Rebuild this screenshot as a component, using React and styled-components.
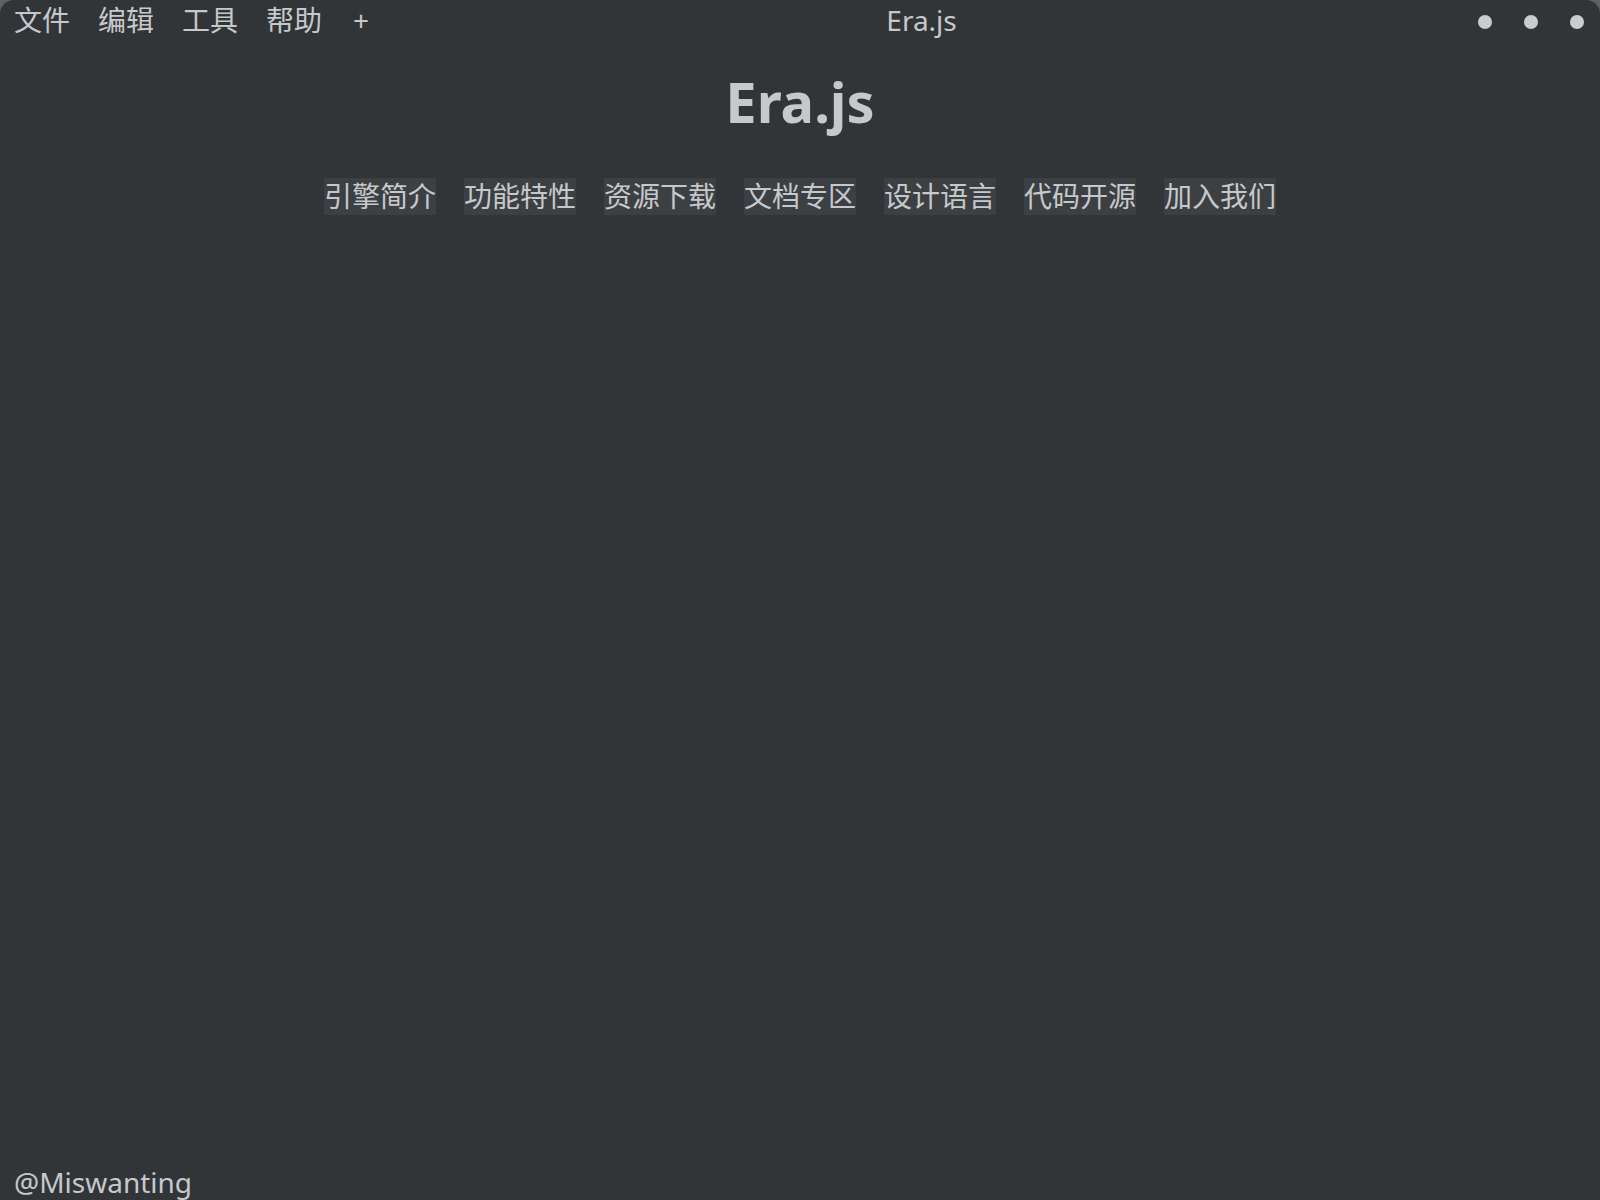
import React from "react";
import styled, { createGlobalStyle } from "styled-components";

const Global = createGlobalStyle`
  html, body {
    margin: 0;
    padding: 0;
    background: #5e6164;
    overflow: hidden;
  }
  body {
    font-family: "Noto Sans", "Noto Sans CJK SC", sans-serif;
    font-size: 28px;
    color: #c6c9cc;
  }
`;

const Window = styled.div`
  height: 100vh;
  display: flex;
  flex-direction: column;
  background: #323538;
  border-radius: 14px 14px 0 0;
  overflow: hidden;
`;

const TitleBar = styled.header`
  height: 42px;
  flex-shrink: 0;
  display: flex;
  align-items: flex-start;
  justify-content: space-between;
`;

const Menu = styled.nav`
  display: flex;
  align-items: center;
`;

const MenuItem = styled.span`
  padding: 0 14px;
  line-height: 40px;
  white-space: nowrap;
  cursor: default;
  ${(p) => p.$add && `width: 17px; padding: 0 11px 0 17px; text-align: left;`}
`;

const WindowTitle = styled.div`
  line-height: 40px;
  white-space: nowrap;
`;

const Controls = styled.div`
  display: flex;
  align-items: center;
`;

const ControlSlot = styled.div`
  padding: 0 16px;
  height: 42px;
  display: flex;
  align-items: center;
`;

const Dot = styled.span`
  width: 14px;
  height: 14px;
  border-radius: 50%;
  background: #c9cdd1;
  margin-top: 2px;
`;

const Main = styled.main`
  flex: 1;
  display: flex;
  flex-direction: column;
  align-items: center;
  padding-top: 21px;
`;

const Heading = styled.h1`
  margin: 0;
  font-size: 56px;
  font-weight: 700;
  line-height: 76px;
  color: #c6c9cc;
`;

const Nav = styled.nav`
  margin-top: 39px;
  display: flex;
  gap: 28px;
  justify-content: center;
`;

const NavItem = styled.span`
  display: inline-block;
  height: 37px;
  line-height: 37px;
  background: #3d4043;
  white-space: nowrap;
  cursor: pointer;
`;

const Footer = styled.footer`
  flex-shrink: 0;
  height: 39px;
  line-height: 39px;
  padding: 0 14px;
  margin-bottom: -2px;
  white-space: nowrap;
`;

const menu = ["文件", "编辑", "工具", "帮助"];
const links = ["引擎简介", "功能特性", "资源下载", "文档专区", "设计语言", "代码开源", "加入我们"];

export default function App() {
  return (
    <>
      <Global />
      <Window>
        <TitleBar>
          <Menu>
            {menu.map((m) => (
              <MenuItem key={m}>{m}</MenuItem>
            ))}
            <MenuItem $add>+</MenuItem>
          </Menu>
          <WindowTitle>Era.js</WindowTitle>
          <Controls>
            {[0, 1, 2].map((i) => (
              <ControlSlot key={i}>
                <Dot />
              </ControlSlot>
            ))}
          </Controls>
        </TitleBar>
        <Main>
          <Heading>Era.js</Heading>
          <Nav>
            {links.map((l) => (
              <NavItem key={l}>{l}</NavItem>
            ))}
          </Nav>
        </Main>
        <Footer>@Miswanting</Footer>
      </Window>
    </>
  );
}
